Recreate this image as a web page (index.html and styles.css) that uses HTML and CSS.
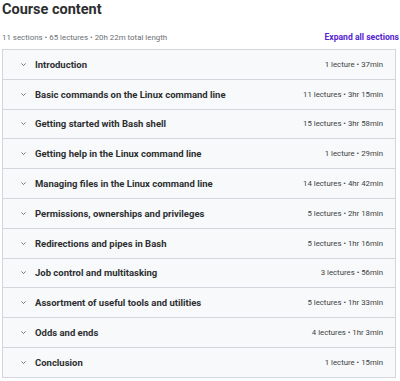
FILE: index.html
```html
<!DOCTYPE html>
<html>
<head>
<meta charset="utf-8">
<link rel="stylesheet" href="styles.css">
</head>
<body>
<div class="page">
  <h2 class="title">Course content</h2>
  <div class="meta">
    <span class="summary">11 sections • 65 lectures • 20h 22m total length</span>
    <span class="expand">Expand all sections</span>
  </div>
  <div class="sections">
    <div class="row"><span class="chev"><svg viewBox="0 0 10 10" width="7" height="7"><path d="M2 3.5 L5 6.5 L8 3.5" fill="none" stroke="#5a5f63" stroke-width="1.2"/></svg></span><span class="name">Introduction</span><span class="info">1 lecture • 37min</span></div>
    <div class="row"><span class="chev"><svg viewBox="0 0 10 10" width="7" height="7"><path d="M2 3.5 L5 6.5 L8 3.5" fill="none" stroke="#5a5f63" stroke-width="1.2"/></svg></span><span class="name">Basic commands on the Linux command line</span><span class="info">11 lectures • 3hr 15min</span></div>
    <div class="row"><span class="chev"><svg viewBox="0 0 10 10" width="7" height="7"><path d="M2 3.5 L5 6.5 L8 3.5" fill="none" stroke="#5a5f63" stroke-width="1.2"/></svg></span><span class="name">Getting started with Bash shell</span><span class="info">15 lectures • 3hr 58min</span></div>
    <div class="row"><span class="chev"><svg viewBox="0 0 10 10" width="7" height="7"><path d="M2 3.5 L5 6.5 L8 3.5" fill="none" stroke="#5a5f63" stroke-width="1.2"/></svg></span><span class="name">Getting help in the Linux command line</span><span class="info">1 lecture • 29min</span></div>
    <div class="row"><span class="chev"><svg viewBox="0 0 10 10" width="7" height="7"><path d="M2 3.5 L5 6.5 L8 3.5" fill="none" stroke="#5a5f63" stroke-width="1.2"/></svg></span><span class="name">Managing files in the Linux command line</span><span class="info">14 lectures • 4hr 42min</span></div>
    <div class="row"><span class="chev"><svg viewBox="0 0 10 10" width="7" height="7"><path d="M2 3.5 L5 6.5 L8 3.5" fill="none" stroke="#5a5f63" stroke-width="1.2"/></svg></span><span class="name">Permissions, ownerships and privileges</span><span class="info">5 lectures • 2hr 18min</span></div>
    <div class="row"><span class="chev"><svg viewBox="0 0 10 10" width="7" height="7"><path d="M2 3.5 L5 6.5 L8 3.5" fill="none" stroke="#5a5f63" stroke-width="1.2"/></svg></span><span class="name">Redirections and pipes in Bash</span><span class="info">5 lectures • 1hr 16min</span></div>
    <div class="row"><span class="chev"><svg viewBox="0 0 10 10" width="7" height="7"><path d="M2 3.5 L5 6.5 L8 3.5" fill="none" stroke="#5a5f63" stroke-width="1.2"/></svg></span><span class="name">Job control and multitasking</span><span class="info">3 lectures • 56min</span></div>
    <div class="row"><span class="chev"><svg viewBox="0 0 10 10" width="7" height="7"><path d="M2 3.5 L5 6.5 L8 3.5" fill="none" stroke="#5a5f63" stroke-width="1.2"/></svg></span><span class="name">Assortment of useful tools and utilities</span><span class="info">5 lectures • 1hr 33min</span></div>
    <div class="row"><span class="chev"><svg viewBox="0 0 10 10" width="7" height="7"><path d="M2 3.5 L5 6.5 L8 3.5" fill="none" stroke="#5a5f63" stroke-width="1.2"/></svg></span><span class="name">Odds and ends</span><span class="info">4 lectures • 1hr 3min</span></div>
    <div class="row"><span class="chev"><svg viewBox="0 0 10 10" width="7" height="7"><path d="M2 3.5 L5 6.5 L8 3.5" fill="none" stroke="#5a5f63" stroke-width="1.2"/></svg></span><span class="name">Conclusion</span><span class="info">1 lecture • 15min</span></div>
  </div>
</div>
</body>
</html>
```

FILE: styles.css
```css
* { box-sizing: border-box; }
body {
  margin: 0;
  background: #ffffff;
  font-family: Roboto, "Noto Sans", sans-serif;
  color: #2d2f31;
}
.page {
  padding: 0 4px 0 2px;
}
.title {
  margin: 0;
  padding-top: 1px;
  height: 19px;
  font-size: 14.5px;
  font-weight: 700;
  line-height: 18px;
}
.meta {
  display: flex;
  justify-content: space-between;
  align-items: center;
  height: 30px;
  padding-top: 6px;
}
.summary {
  font-size: 7.9px;
  color: #6a6f73;
}
.expand {
  font-size: 8.6px;
  font-weight: 700;
  color: #5624d0;
  margin-right: -3px;
}
.sections {
  border: 1px solid #d1d7dc;
  border-bottom: none;
}
.row {
  display: flex;
  align-items: center;
  height: 29.8px;
  background: #f7f9fa;
  border-bottom: 1px solid #d1d7dc;
  padding: 0 12px 0 16px;
}
.chev {
  display: flex;
  width: 16px;
  padding-left: 1px;
}
.name {
  flex: 1;
  font-size: 9.5px;
  font-weight: 700;
}
.info {
  font-size: 7.8px;
  color: #3e4143;
}
```
